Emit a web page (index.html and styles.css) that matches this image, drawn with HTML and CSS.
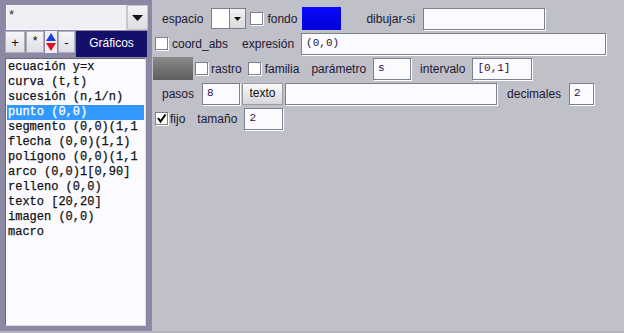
FILE: index.html
```html
<!DOCTYPE html>
<html lang="es">
<head>
    <meta charset="UTF-8">
    <title>Gráficos</title>
    <link rel="stylesheet" href="styles.css">
</head>
<body>
    <div class="app">
        <aside class="tools">
            <div class="combo">
                <div class="combo-field">*</div>
                <div class="combo-btn"><svg width="11" height="6" viewBox="0 0 11 6"><path d="M0 0H11L5.5 6Z" fill="#111"/></svg></div>
            </div>
            <div class="tool-row">
                <div class="tbtn tbtn-plus">+</div>
                <div class="tbtn tbtn-star">*</div>
                <div class="updown">
                    <svg width="12" height="11" viewBox="0 0 12 11"><path d="M1 10H11L6 2Z" fill="#1a3ee0"/></svg>
                    <svg width="12" height="11" viewBox="0 0 12 11"><path d="M1 1H11L6 9Z" fill="#e0102a"/></svg>
                </div>
                <div class="tbtn tbtn-minus">-</div>
                <div class="tab">Gráficos</div>
            </div>
            <ul class="list">
                <li>ecuación y=x</li>
                <li>curva (t,t)</li>
                <li>sucesión (n,1/n)</li>
                <li class="selected">punto (0,0)</li>
                <li>segmento (0,0)(1,1</li>
                <li>flecha (0,0)(1,1)</li>
                <li>polígono (0,0)(1,1</li>
                <li>arco (0,0)1[0,90]</li>
                <li>relleno (0,0)</li>
                <li>texto [20,20]</li>
                <li>imagen (0,0)</li>
                <li>macro</li>
            </ul>
        </aside>

        <main class="props">
            <div class="row">
                <span class="label ml-10">espacio</span>
                <div class="select ml-8">
                    <div class="select-field"></div>
                    <div class="select-btn"><svg width="7" height="4" viewBox="0 0 7 4"><path d="M0 0H7L3.5 4Z" fill="#111"/></svg></div>
                </div>
                <span class="check ml-4"></span>
                <span class="label ml-4">fondo</span>
                <div class="swatch ml-5"></div>
                <span class="label ml-25">dibujar-si</span>
                <div class="field ml-8 w-122"></div>
            </div>

            <div class="row">
                <span class="check ml-3"></span>
                <span class="label ml-4">coord_abs</span>
                <span class="label ml-14">expresión</span>
                <div class="field ml-7 w-305">(0,0)</div>
            </div>

            <div class="row">
                <div class="gray-box ml-1"></div>
                <span class="check ml-2"></span>
                <span class="label ml-3">rastro</span>
                <span class="check ml-6"></span>
                <span class="label ml-4">familia</span>
                <span class="label ml-12">parámetro</span>
                <div class="field ml-7 w-38">s</div>
                <span class="label ml-9">intervalo</span>
                <div class="field ml-7 w-60">[0,1]</div>
            </div>

            <div class="row">
                <span class="label ml-10">pasos</span>
                <div class="field ml-8 w-38">8</div>
                <div class="button ml-2">texto</div>
                <div class="field ml-2 w-212"></div>
                <span class="label ml-10">decimales</span>
                <div class="field ml-8 w-25">2</div>
            </div>

            <div class="row">
                <span class="check checked ml-3"><svg width="11" height="11" viewBox="0 0 11 11"><path d="M2 5L4.5 8.5L9.5 1.5" stroke="#000" stroke-width="2" fill="none"/></svg></span>
                <span class="label ml-2">fijo</span>
                <span class="label ml-12">tamaño</span>
                <div class="field ml-7 w-39">2</div>
            </div>
        </main>
    </div>
</body>
</html>
```

FILE: styles.css
```css
body {
    margin: 0;
    padding: 0;
    font-family: 'Liberation Sans', Arial, sans-serif;
    font-size: 12px;
    overflow: hidden;
}

.app {
    display: flex;
    height: 331px;
    border-bottom: 2px solid #b4b4bc;
    background-color: #c0c0c8;
}

/* panel izquierdo */
.tools {
    width: 152px;
    flex-shrink: 0;
    box-sizing: border-box;
    padding: 5px 0 0 5px;
    background-color: #8a88a2;
    display: flex;
    flex-direction: column;
}

.combo {
    display: flex;
    margin-left: 1px;
    width: 142px;
    height: 25px;
}

.combo-field {
    flex: 1;
    box-sizing: border-box;
    background: #eeeef4;
    border: 1px solid #f8f8fc;
    border-right-color: #c8c8d0;
    font-family: 'Liberation Mono', monospace;
    font-size: 12px;
    line-height: 14px;
    padding: 3px 0 0 1px;
    color: #222;
}

.combo-btn {
    width: 21px;
    box-sizing: border-box;
    background: linear-gradient(#f4f4f6, #dcdce2);
    border: 1px solid #c4c4cc;
    display: flex;
    align-items: center;
    justify-content: center;
}

.tool-row {
    display: flex;
    align-items: flex-start;
    margin-top: 1px;
}

.tbtn {
    height: 22px;
    box-sizing: border-box;
    background: linear-gradient(#f6f6f8, #dedee4);
    border: 1px solid #b0b0bc;
    display: flex;
    align-items: center;
    justify-content: center;
    font-size: 13px;
    color: #000;
    margin-right: 1px;
}

.tbtn-plus { width: 20px; }
.tbtn-star { width: 18px; font-family: 'Liberation Mono', monospace; font-size: 12px; }
.tbtn-minus { width: 17px; }

.updown {
    width: 12px;
    height: 22px;
    background: #eeeef2;
    display: flex;
    flex-direction: column;
    margin-right: 1px;
}

.tab {
    width: 71px;
    height: 26px;
    background-color: #14106a;
    color: #fff;
    display: flex;
    align-items: center;
    justify-content: center;
    padding-bottom: 3px;
    box-sizing: border-box;
}

.list {
    list-style: none;
    margin: 1px 0 0;
    padding: 1px 1px 0;
    width: 141px;
    height: 268px;
    box-sizing: border-box;
    background: #fafaff;
    border: 1px solid #dcdce0;
    border-top-color: #6a6878;
    border-left-color: #6a6878;
    font-family: 'Liberation Mono', monospace;
    font-size: 12px;
    color: #111;
    -webkit-text-stroke: 0.25px #111;
    overflow: hidden;
}

.list li {
    height: 15px;
    line-height: 15px;
    padding-left: 1px;
    white-space: nowrap;
}

.list li.selected {
    background-color: #3399ff;
    color: #fff;
    -webkit-text-stroke: 0.25px #fff;
    outline: 1px dotted #c07818;
    outline-offset: -1px;
}

/* panel derecho */
.props {
    flex: 1;
    padding-top: 7px;
    display: flex;
    flex-direction: column;
    gap: 2px;
}

.row {
    display: flex;
    align-items: center;
    height: 23px;
}

.label {
    color: #1c1834;
    white-space: nowrap;
}

.field {
    height: 22px;
    box-sizing: border-box;
    background: #fafaff;
    border: 1px solid #7a808c;
    box-shadow: 1px 1px 0 #fff;
    font-family: 'Liberation Mono', monospace;
    font-size: 11px;
    color: #2c1040;
    padding: 3px 0 0 4px;
    line-height: 12px;
}

.select {
    display: flex;
    width: 35px;
    height: 21px;
}

.select-field {
    flex: 1;
    background: #fff;
    border: 1px solid #7a808c;
    border-right: none;
}

.select-btn {
    width: 17px;
    box-sizing: border-box;
    background: linear-gradient(#f4f4f6, #d8d8de);
    border: 1px solid #7a808c;
    display: flex;
    align-items: center;
    justify-content: center;
}

.check {
    width: 13px;
    height: 13px;
    box-sizing: border-box;
    background: #fff;
    border: 1px solid #7a808c;
    box-shadow: 1px 1px 0 #fff;
    display: flex;
    align-items: center;
    justify-content: center;
}

.swatch {
    width: 39px;
    height: 23px;
    background: linear-gradient(#0a0aff, #0000d6);
}

.gray-box {
    width: 40px;
    height: 23px;
    background: linear-gradient(#8a8a8a, #5e5e5e);
}

.button {
    width: 41px;
    height: 22px;
    box-sizing: border-box;
    background: linear-gradient(#fafafa, #d6d6da);
    border: 1px solid #9a9aa4;
    display: flex;
    align-items: center;
    justify-content: center;
    color: #111;
    padding-bottom: 2px;
}

.ml-1 { margin-left: 1px; }
.ml-2 { margin-left: 2px; }
.ml-3 { margin-left: 3px; }
.ml-4 { margin-left: 4px; }
.ml-5 { margin-left: 5px; }
.ml-6 { margin-left: 6px; }
.ml-7 { margin-left: 7px; }
.ml-8 { margin-left: 8px; }
.ml-9 { margin-left: 9px; }
.ml-10 { margin-left: 10px; }
.ml-12 { margin-left: 12px; }
.ml-14 { margin-left: 14px; }
.ml-25 { margin-left: 25px; }

.w-25 { width: 25px; }
.w-38 { width: 38px; }
.w-39 { width: 39px; }
.w-60 { width: 60px; }
.w-122 { width: 122px; }
.w-212 { width: 212px; }
.w-305 { width: 305px; }
```
